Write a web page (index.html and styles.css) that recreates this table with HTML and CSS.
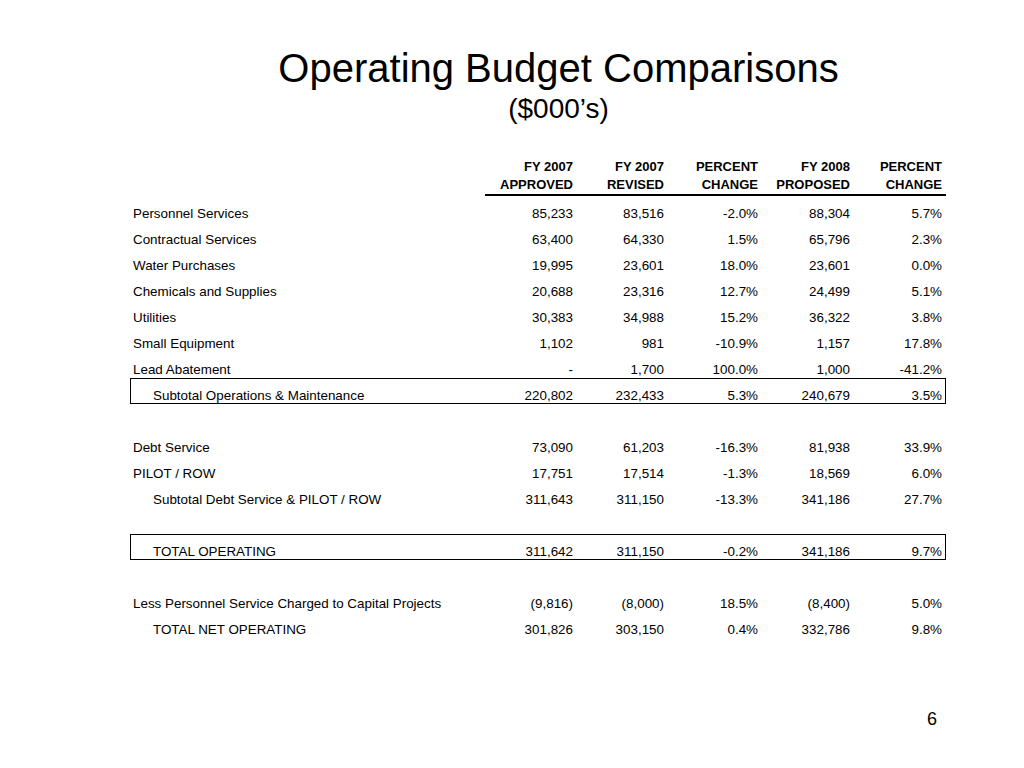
FILE: index.html
```html
<!DOCTYPE html>
<html lang="en">
<head>
<meta charset="utf-8">
<title>Operating Budget Comparisons</title>
<link rel="stylesheet" href="styles.css">
</head>
<body>
<div class="slide">
  <header class="title-block">
    <h1 class="title">Operating Budget Comparisons</h1>
    <p class="subtitle">($000’s)</p>
  </header>

  <div class="budget">
    <div class="row head">
      <span class="label"></span>
      <span class="hc">FY 2007<br>APPROVED</span>
      <span class="hc">FY 2007<br>REVISED</span>
      <span class="hc">PERCENT<br>CHANGE</span>
      <span class="hc">FY 2008<br>PROPOSED</span>
      <span class="hc last">PERCENT<br>CHANGE</span>
    </div>

    <div class="row"><span class="label">Personnel Services</span><span>85,233</span><span>83,516</span><span>-2.0%</span><span>88,304</span><span class="last">5.7%</span></div>
    <div class="row"><span class="label">Contractual Services</span><span>63,400</span><span>64,330</span><span>1.5%</span><span>65,796</span><span class="last">2.3%</span></div>
    <div class="row"><span class="label">Water Purchases</span><span>19,995</span><span>23,601</span><span>18.0%</span><span>23,601</span><span class="last">0.0%</span></div>
    <div class="row"><span class="label">Chemicals and Supplies</span><span>20,688</span><span>23,316</span><span>12.7%</span><span>24,499</span><span class="last">5.1%</span></div>
    <div class="row"><span class="label">Utilities</span><span>30,383</span><span>34,988</span><span>15.2%</span><span>36,322</span><span class="last">3.8%</span></div>
    <div class="row"><span class="label">Small Equipment</span><span>1,102</span><span>981</span><span>-10.9%</span><span>1,157</span><span class="last">17.8%</span></div>
    <div class="row"><span class="label">Lead Abatement</span><span>-</span><span>1,700</span><span>100.0%</span><span>1,000</span><span class="last">-41.2%</span></div>
    <div class="row boxed"><span class="label indent">Subtotal Operations &amp; Maintenance</span><span>220,802</span><span>232,433</span><span>5.3%</span><span>240,679</span><span class="last">3.5%</span></div>
    <div class="row empty"></div>
    <div class="row"><span class="label">Debt Service</span><span>73,090</span><span>61,203</span><span>-16.3%</span><span>81,938</span><span class="last">33.9%</span></div>
    <div class="row"><span class="label">PILOT / ROW</span><span>17,751</span><span>17,514</span><span>-1.3%</span><span>18,569</span><span class="last">6.0%</span></div>
    <div class="row"><span class="label indent">Subtotal Debt Service &amp; PILOT / ROW</span><span>311,643</span><span>311,150</span><span>-13.3%</span><span>341,186</span><span class="last">27.7%</span></div>
    <div class="row empty"></div>
    <div class="row boxed"><span class="label indent">TOTAL OPERATING</span><span>311,642</span><span>311,150</span><span>-0.2%</span><span>341,186</span><span class="last">9.7%</span></div>
    <div class="row empty"></div>
    <div class="row"><span class="label">Less Personnel Service Charged to Capital Projects</span><span>(9,816)</span><span>(8,000)</span><span>18.5%</span><span>(8,400)</span><span class="last">5.0%</span></div>
    <div class="row"><span class="label indent">TOTAL NET OPERATING</span><span>301,826</span><span>303,150</span><span>0.4%</span><span>332,786</span><span class="last">9.8%</span></div>
  </div>

  <footer class="page-num">6</footer>
</div>
</body>
</html>
```

FILE: styles.css
```css
html, body {
  margin: 0;
  padding: 0;
  background: #ffffff;
}

.slide {
  width: 1024px;
  height: 768px;
  overflow: hidden;
  position: relative;
  background: #ffffff;
  color: #000000;
  font-family: "Liberation Sans", Arial, sans-serif;
}

.title-block {
  padding-top: 45px;
  padding-left: 93px;
  text-align: center;
}

.title {
  margin: 0;
  font-size: 40px;
  line-height: 46px;
  font-weight: normal;
}

.subtitle {
  margin: 2px 0 0 0;
  font-size: 28px;
  line-height: 32px;
}

.budget {
  margin-top: 33px;
  margin-left: 130px;
  width: 816px;
  font-size: 13.4px;
}

.row {
  display: grid;
  grid-template-columns: 355px 88px 91px 94px 92px 96px;
  height: 26px;
  box-sizing: border-box;
  padding-top: 10px;
  line-height: 16px;
}

.row > span {
  text-align: right;
  white-space: nowrap;
}

.row > span.last {
  padding-right: 4px;
}

.row > .label {
  text-align: left;
  padding-left: 3px;
}

.row > .label.indent {
  padding-left: 23px;
}

.row.head {
  height: auto;
  padding-top: 0;
  line-height: 18px;
  font-size: 13px;
  font-weight: bold;
}

.row.head .hc {
  border-bottom: 2px solid #000000;
}

.row.boxed {
  outline: 1px solid #000000;
  outline-offset: -1px;
}

.page-num {
  position: absolute;
  right: 87px;
  top: 709px;
  font-size: 18px;
  line-height: 20px;
}
```
